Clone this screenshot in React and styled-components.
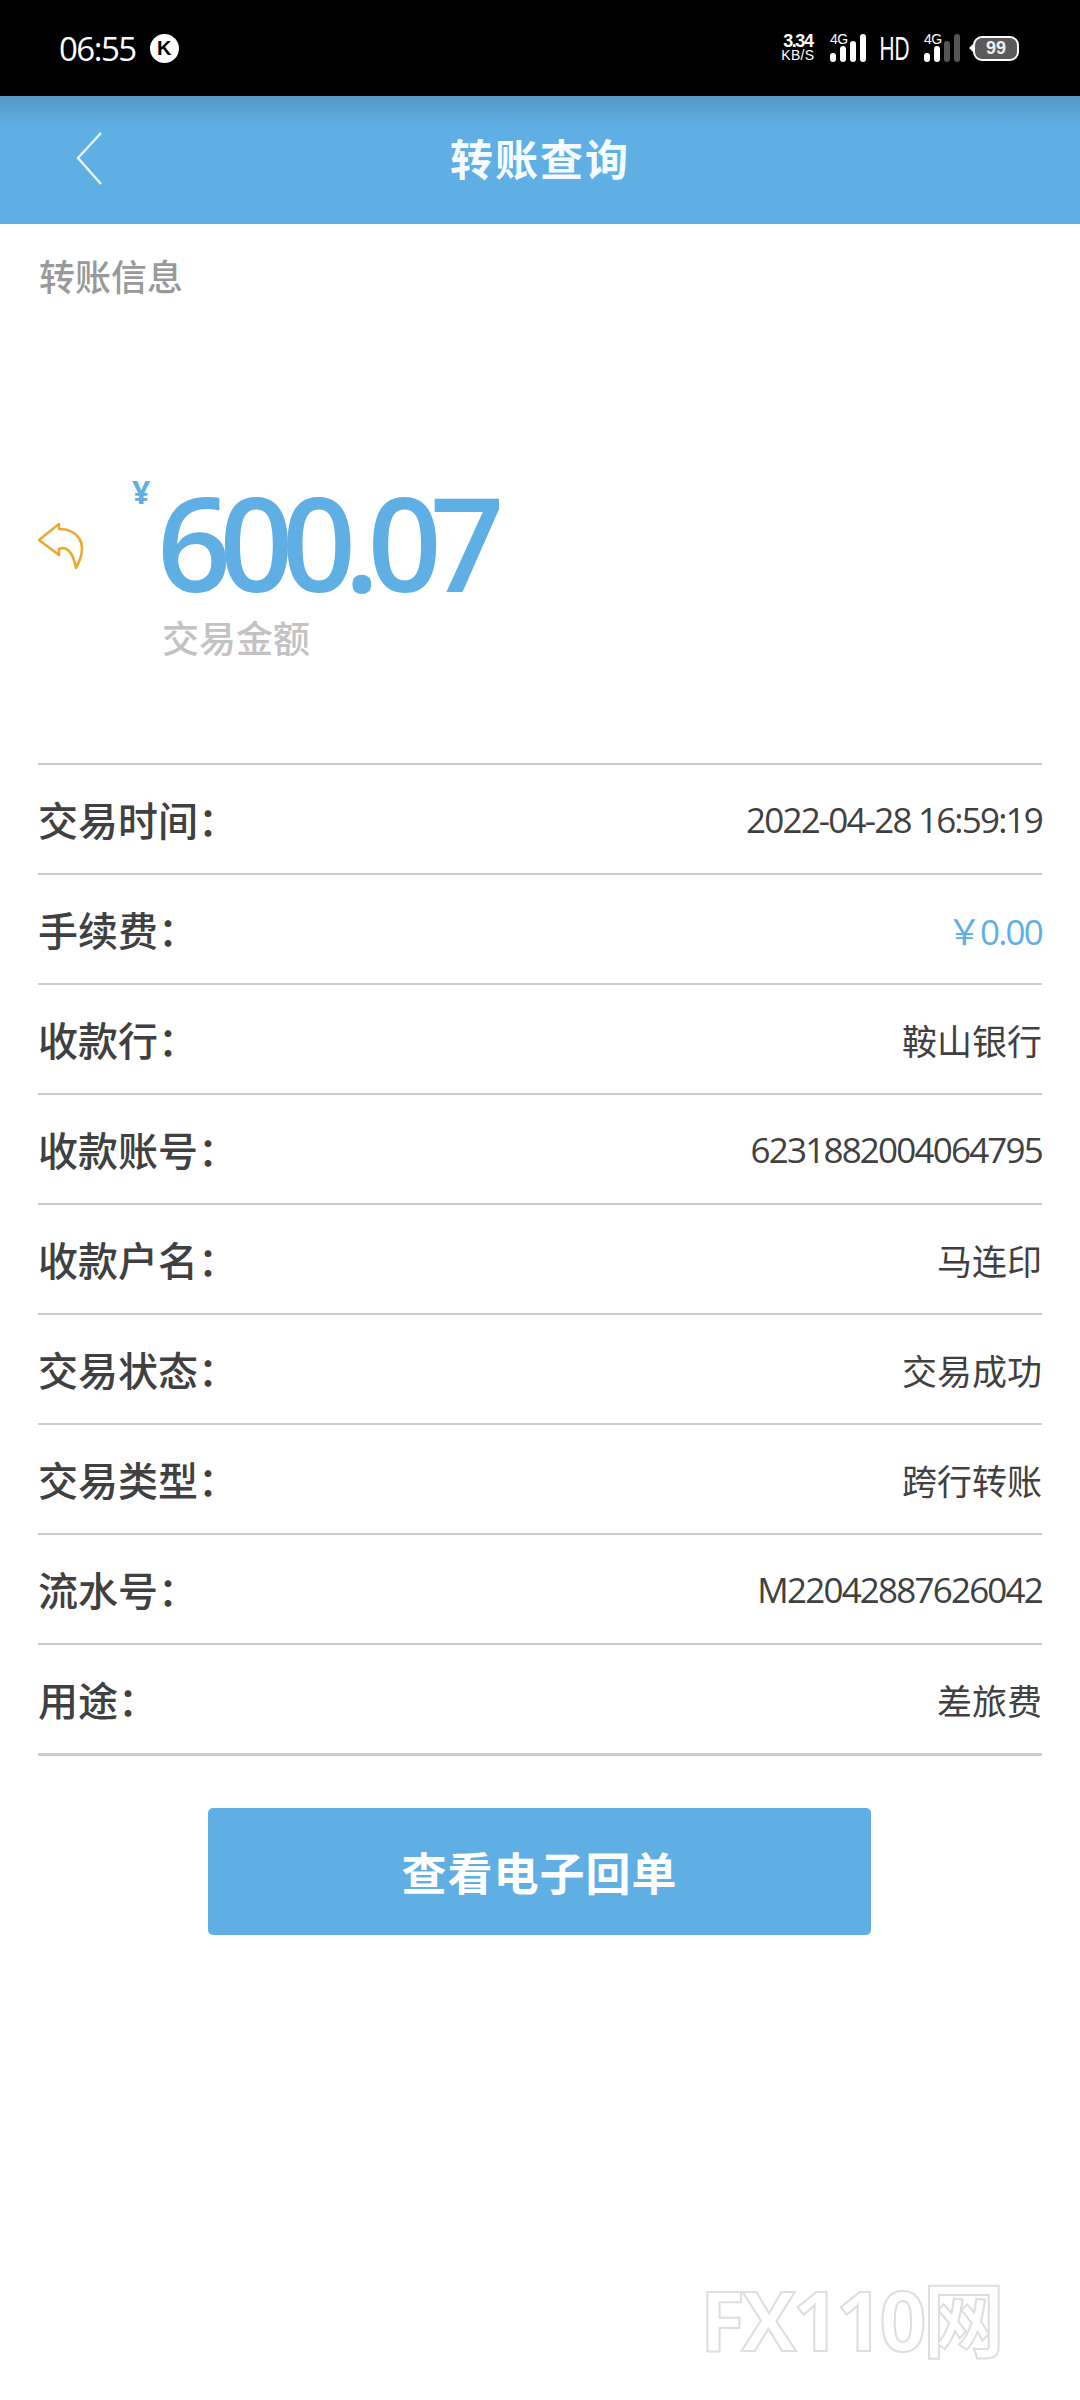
import React from "react"
import styled, { createGlobalStyle } from "styled-components"

const rows = [
  { label: "交易时间：", value: "2022-04-28 16:59:19", numeric: true },
  { label: "手续费：", value: "￥0.00", accent: true, numeric: true },
  { label: "收款行：", value: "鞍山银行" },
  { label: "收款账号：", value: "6231882004064795", numeric: true },
  { label: "收款户名：", value: "马连印" },
  { label: "交易状态：", value: "交易成功" },
  { label: "交易类型：", value: "跨行转账" },
  { label: "流水号：", value: "M22042887626042", numeric: true },
  { label: "用途：", value: "差旅费" },
]

const SignalBars = ({ lit }) => (
  <svg width="36" height="28" viewBox="0 0 36 28">
    {[
      [0, 19, 9],
      [10, 12, 16],
      [20, 7, 21],
      [30, 0, 28],
    ].map(([x, y, h], i) => (
      <rect key={x} x={x} y={y} width="6" height={h} rx="3" fill={i < lit ? "#fff" : "#555"} />
    ))}
  </svg>
)

const App = () => {
  return (
    <Page>
      <GlobalStyle />
      <StatusBar>
        <StatusLeft>
          <Clock>06:55</Clock>
          <KBadge>K</KBadge>
        </StatusLeft>
        <StatusRight>
          <Speed>
            <b>3.34</b>
            <span>KB/S</span>
          </Speed>
          <Signal>
            <NetTag>4G</NetTag>
            <SignalBars lit={4} />
          </Signal>
          <Hd>HD</Hd>
          <Signal>
            <NetTag>4G</NetTag>
            <SignalBars lit={2} />
          </Signal>
          <Battery>99</Battery>
        </StatusRight>
      </StatusBar>
      <Header>
        <BackButton>
          <svg width="30" height="56" viewBox="0 0 30 56" fill="none">
            <path d="M27 2 L4 27 L27 53" stroke="#e8f5fd" strokeWidth="2.4" />
          </svg>
        </BackButton>
        <Title>转账查询</Title>
      </Header>
      <SectionLabel>转账信息</SectionLabel>
      <Amount>
        <ReplyIcon>
          <svg width="48" height="48" viewBox="0 0 48 48" fill="none">
            <path
              d="M21 1 L1 17 L21 32 L21 26 C28 23 35 28 38 45 C44 34 47 24 41 15 C36 8 28 6 21 6 Z"
              stroke="#eba92f"
              strokeWidth="2.6"
              strokeLinejoin="round"
            />
          </svg>
        </ReplyIcon>
        <AmountBody>
          <AmountLine>
            <Currency>¥</Currency>
            <AmountValue>600.07</AmountValue>
          </AmountLine>
          <AmountCaption>交易金额</AmountCaption>
        </AmountBody>
      </Amount>
      <List>
        {rows.map(row => (
          <Row key={row.label}>
            <RowLabel>{row.label}</RowLabel>
            <RowValue $accent={row.accent} $numeric={row.numeric}>
              {row.value}
            </RowValue>
          </Row>
        ))}
      </List>
      <ReceiptButton>查看电子回单</ReceiptButton>
      <Watermark>FX110网</Watermark>
    </Page>
  )
}

const GlobalStyle = createGlobalStyle`
  html, body {
    margin: 0;
    padding: 0;
    background: #fff;
  }
`

const Page = styled.div`
  width: 1080px;
  height: 2400px;
  overflow: hidden;
  position: relative;
  background: #fff;
  font-family: "Noto Sans CJK SC", "Noto Sans", sans-serif;
`

const StatusBar = styled.div`
  height: 96px;
  background: #000;
  color: #fff;
  display: flex;
  align-items: center;
  justify-content: space-between;
  padding: 0 61px 0 59px;
  box-sizing: border-box;
`

const StatusLeft = styled.div`
  display: flex;
  align-items: center;
  gap: 14px;
`

const Clock = styled.span`
  font-family: "Open Sans", sans-serif;
  font-size: 33px;
  letter-spacing: -1.5px;
`

const KBadge = styled.span`
  width: 29px;
  height: 29px;
  border-radius: 50%;
  background: #fff;
  color: #000;
  font: bold 20px "Liberation Sans", sans-serif;
  display: flex;
  align-items: center;
  justify-content: center;
`

const StatusRight = styled.div`
  display: flex;
  align-items: center;
  gap: 14px;
`

const Speed = styled.div`
  width: 36px;
  display: flex;
  flex-direction: column;
  align-items: center;
  font-family: "Liberation Sans", sans-serif;
  line-height: 14px;
  font-size: 14px;
  b {
    font-size: 18px;
    letter-spacing: -1.5px;
  }
  span {
    letter-spacing: 0.3px;
  }
`

const Signal = styled.div`
  position: relative;
  width: 36px;
  height: 28px;
  svg {
    display: block;
  }
`

const NetTag = styled.span`
  position: absolute;
  left: 0;
  top: -3px;
  font: 14px "Liberation Sans", sans-serif;
  letter-spacing: -0.5px;
`

const Hd = styled.span`
  font: 34px "Liberation Sans", sans-serif;
  transform: scaleX(0.61);
  margin: 0 -9.5px;
`

const Battery = styled.span`
  width: 46px;
  height: 25px;
  box-sizing: border-box;
  border: 2.5px solid #fff;
  border-radius: 9px;
  background: #5a5a5a;
  font: bold 18px "Liberation Sans", sans-serif;
  line-height: 20px;
  text-align: center;
  color: #eee;
  margin-left: -1px;
  position: relative;
  &::before {
    content: "";
    position: absolute;
    left: -6px;
    top: 6px;
    border: 4px solid transparent;
    border-right-color: #fff;
    border-left: 0;
  }
`

const Header = styled.header`
  height: 128px;
  padding-bottom: 6px;
  box-sizing: border-box;
  position: relative;
  background: linear-gradient(#5695c4 0, #5fafe4 28px);
  display: flex;
  align-items: center;
  justify-content: center;
`

const BackButton = styled.div`
  position: absolute;
  left: 74px;
  top: 35px;
  width: 30px;
  height: 56px;
`

const Title = styled.h1`
  margin: 0;
  font-size: 43px;
  font-weight: 700;
  color: #f5fbff;
  letter-spacing: 2px;
`

const SectionLabel = styled.div`
  margin: 27px 0 0 39px;
  font-size: 36px;
  line-height: 48px;
  color: #999;
  font-weight: 500;
`

const Amount = styled.section`
  display: flex;
  align-items: flex-start;
  padding: 177px 0 0 38px;
`

const ReplyIcon = styled.div`
  width: 48px;
  height: 48px;
  margin-top: 47px;
`

const AmountBody = styled.div`
  margin-left: 74px;
  display: flex;
  flex-direction: column;
`

const AmountLine = styled.div`
  display: flex;
  align-items: flex-start;
  position: relative;
`

const Currency = styled.span`
  position: absolute;
  left: -28px;
  top: -6px;
  font: bold 32px "Noto Sans", sans-serif;
  color: #5fafe4;
`

const AmountValue = styled.span`
  margin-left: -3px;
  font-family: "Open Sans", sans-serif;
  font-size: 130px;
  font-weight: 600;
  line-height: 132px;
  letter-spacing: -12px;
  color: #5fafe4;
`

const AmountCaption = styled.div`
  margin: 4px 0 0 2px;
  font-size: 37px;
  line-height: 50px;
  font-weight: 500;
  color: #c2c2c2;
`

const List = styled.div`
  margin: 101px 38px 0;
  border-top: 2px solid #ccc;
  border-bottom: 3px solid #ccc;
`

const Row = styled.div`
  height: 108px;
  display: flex;
  align-items: center;
  justify-content: space-between;
  & + & {
    border-top: 2px solid #ccc;
  }
`

const RowLabel = styled.span`
  font-size: 40px;
  font-weight: 500;
  color: #404040;
`

const RowValue = styled.span`
  font-family: "Open Sans", "Noto Sans CJK SC", sans-serif;
  font-size: 35px;
  letter-spacing: ${props => (props.$numeric ? "-1.8px" : "0")};
  color: ${props => (props.$accent ? "#5fafe4" : "#404040")};
`

const ReceiptButton = styled.button`
  display: block;
  width: 663px;
  height: 127px;
  margin: 52px 0 0 208px;
  border: 0;
  border-radius: 5px;
  background: #5fafe4;
  color: #fff;
  font-family: inherit;
  font-size: 45px;
  font-weight: 700;
  letter-spacing: 1px;
`

const Watermark = styled.div`
  position: absolute;
  left: 700px;
  top: 2261px;
  font-family: "Open Sans", "Noto Sans CJK SC", sans-serif;
  font-size: 82px;
  line-height: 116px;
  font-weight: 700;
  color: #fff;
  letter-spacing: -3.5px;
  white-space: nowrap;
  -webkit-text-stroke: 2px #dedede;
`

export default App
